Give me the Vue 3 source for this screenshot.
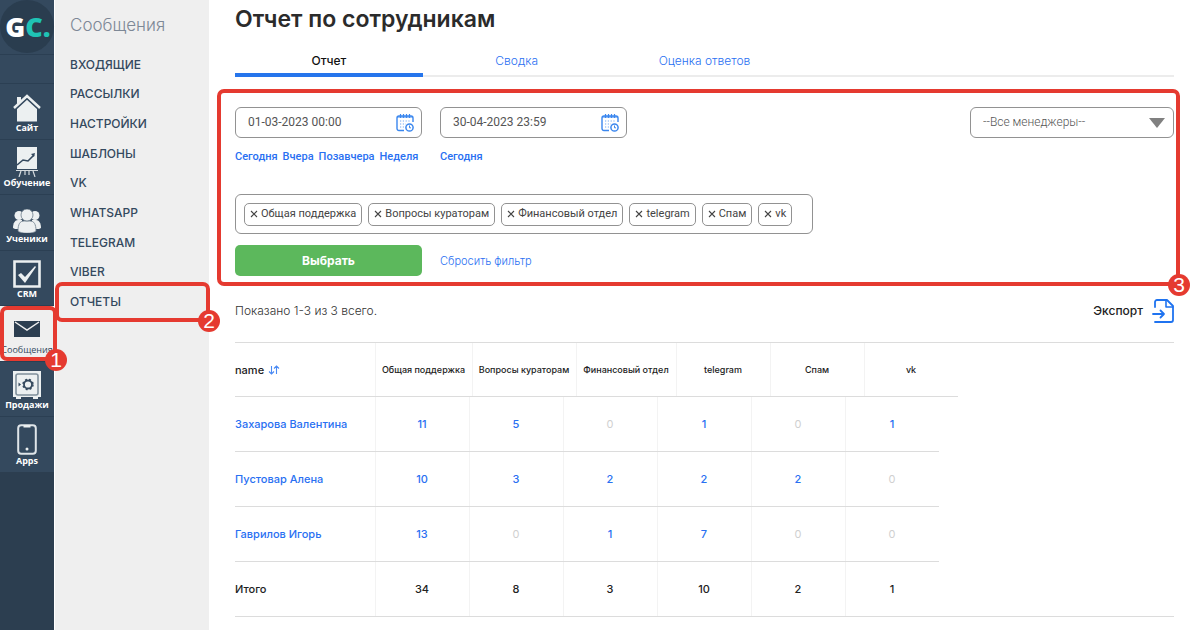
<script setup>
import { ref } from 'vue'

const sections = ['ВХОДЯЩИЕ', 'РАССЫЛКИ', 'НАСТРОЙКИ', 'ШАБЛОНЫ', 'VK', 'WHATSAPP', 'TELEGRAM', 'VIBER', 'ОТЧЕТЫ']
const rail = [
  { id: 'site', label: 'Сайт' },
  { id: 'learn', label: 'Обучение' },
  { id: 'users', label: 'Ученики' },
  { id: 'crm', label: 'CRM' },
  { id: 'mail', label: 'Сообщения', active: true },
  { id: 'sales', label: 'Продажи' },
  { id: 'apps', label: 'Apps' }
]
const dates = [
  { id: 'from', label: 'Начало периода', value: ref('01-03-2023 00:00'), quick: ['Сегодня', 'Вчера', 'Позавчера', 'Неделя'] },
  { id: 'to', label: 'Конец периода', value: ref('30-04-2023 23:59'), quick: ['Сегодня'] }
]
const channels = ref(['Общая поддержка', 'Вопросы кураторам', 'Финансовый отдел', 'telegram', 'Спам', 'vk'])
const columns = ['Общая поддержка', 'Вопросы кураторам', 'Финансовый отдел', 'telegram', 'Спам', 'vk']
const rows = [
  { name: 'Захарова Валентина', values: [11, 5, 0, 1, 0, 1] },
  { name: 'Пустовар Алена', values: [10, 3, 2, 2, 2, 0] },
  { name: 'Гаврилов Игорь', values: [13, 0, 1, 7, 0, 0] }
]
const totals = [34, 8, 3, 10, 2, 1]
const remove = (name) => { channels.value = channels.value.filter((c) => c !== name) }
</script>

<template>
  <div class="page">
    <nav class="rail" aria-label="Разделы">
      <a class="logo" href="#"><span class="disc"><span class="g">G</span><span class="c">C.</span></span></a>
      <div class="spacer"></div>
      <div class="rail-items">
        <a v-for="item in rail" :key="item.id" href="#" class="rail-item" :class="{ active: item.active }">
          <svg v-if="item.id === 'site'" width="28" height="28" viewBox="0 0 28 28">
            <path d="M4 3h4v4l-4 4z" fill="#ecf0f1" />
            <path d="M14 4.500L24 14v13.500H4V14z" fill="#ecf0f1" />
            <path d="M1 15.500L14 3.500l13 12" fill="none" stroke="#34495e" stroke-width="3.500" />
            <path d="M1 14L14 2l13 12" fill="none" stroke="#ecf0f1" stroke-width="2.400" />
          </svg>
          <svg v-else-if="item.id === 'learn'" width="28" height="30" viewBox="0 0 28 30">
            <path d="M4 0h20v22H4z" fill="#ecf0f1" />
            <path d="M3 23.500h22M8 24l-2 6M20 24l2 6M12 24v4M16 24v4" stroke="#d5dbdf" stroke-width="1.200" />
            <path d="M4 18l6-5 5 1 6-6" fill="none" stroke="#34495e" stroke-width="1.600" />
            <path d="M18 7l4-1-1 4z" fill="#34495e" />
          </svg>
          <svg v-else-if="item.id === 'users'" width="28" height="24" viewBox="0 0 28 24" fill="#ecf0f1">
            <circle cx="6" cy="6.500" r="4.500" /><circle cx="22" cy="6.500" r="4.500" />
            <path d="M0 19c0-5 2-8 5-8h4v9H2z" /><path d="M28 19c0-5-2-8-5-8h-4v9h7z" />
            <g stroke="#6d7d8c" stroke-width="0.800"><path d="M5 22c0-7 2-10 6-10h6c4 0 6 3 6 10-3 3-15 3-18 0z" /><circle cx="14" cy="6" r="6" /></g>
          </svg>
          <svg v-else-if="item.id === 'crm'" width="28" height="28" viewBox="0 0 28 28">
            <path d="M1.500 1.500h25v25h-25z" fill="none" stroke="#ecf0f1" stroke-width="2.600" />
            <path d="M5 15l3-2 4 4L22 6l1 1-11 16z" fill="#ecf0f1" />
          </svg>
          <svg v-else-if="item.id === 'mail'" width="28" height="18" viewBox="0 0 28 18">
            <path d="M1 1h26v16H1z" fill="#2c3e50" />
            <path d="M2 2l12 8 12-8" fill="none" stroke="#efefef" stroke-width="1.500" />
          </svg>
          <svg v-else-if="item.id === 'sales'" width="28" height="28" viewBox="0 0 28 28">
            <path d="M0 0h28v26h-3v2h-5v-2H8v2H3v-2H0z" fill="#ecf0f1" />
            <rect x="3" y="3" width="22" height="21" rx="2" fill="none" stroke="#7f8f9b" stroke-width="1.600" />
            <circle cx="15" cy="13.500" r="4" fill="none" stroke="#34495e" stroke-width="1.800" />
            <circle cx="15" cy="13.500" r="5" fill="none" stroke="#34495e" stroke-width="1.500" stroke-dasharray="2 2" />
            <path d="M5.500 11.500L8 13.500l-2.500 2z" fill="#34495e" />
          </svg>
          <svg v-else width="20" height="31" viewBox="0 0 20 31">
            <rect x="1.200" y="1.200" width="17.600" height="28.600" rx="3" fill="none" stroke="#dfe5e9" stroke-width="2" />
            <path d="M6.500 1h7v2.500h-7z" fill="#ecf0f1" /><circle cx="10" cy="25" r="1.500" fill="#ecf0f1" />
          </svg>
          <span>{{ item.label }}</span>
          <i v-if="item.active" class="frame frame-rail"><b>1</b></i>
        </a>
      </div>
    </nav>

    <aside class="sidebar">
      <h2>Сообщения</h2>
      <nav class="menu" aria-label="Сообщения">
        <a v-for="name in sections" :key="name" href="#">
          {{ name }}
          <i v-if="name === 'ОТЧЕТЫ'" class="frame frame-menu"><b>2</b></i>
        </a>
      </nav>
    </aside>

    <main>
      <h1>Отчет по сотрудникам</h1>
      <nav class="tabs" aria-label="Вид отчета">
        <a href="#" class="current">Отчет</a>
        <a href="#">Сводка</a>
        <a href="#">Оценка ответов</a>
      </nav>

      <form class="filters" @submit.prevent>
        <i class="frame frame-filters"><b>3</b></i>
        <div class="filter-row">
          <div v-for="d in dates" :key="d.id" class="date">
            <div class="field">
              <input :id="d.id" v-model="d.value.value" type="text" :aria-label="d.label">
              <svg width="18" height="18" viewBox="0 0 18 18" fill="none" stroke="#3b87ee">
                <path d="M8 16.500H3A2 2 0 0 1 1 14.500V4a2 2 0 0 1 2-2h12a2 2 0 0 1 2 2v4" stroke-width="1.400" />
                <path d="M1 3h16M4.500 0v4M7.500 0v4M10.500 0v4M13.500 0v4" stroke-width="1.200" />
                <path d="M4 7h11M4 10h6M4 13h5" stroke-width="1.200" stroke-dasharray="1.200 1.600" stroke-opacity="0.700" />
                <circle cx="13.500" cy="13.500" r="3.600" stroke-width="1.500" />
                <path d="M13.500 11.500v2.300H15" stroke-width="1" />
              </svg>
            </div>
            <div class="quick"><a v-for="q in d.quick" :key="q" href="#">{{ q }}</a></div>
          </div>
          <div class="manager">
            <select aria-label="Менеджер"><option>--Все менеджеры--</option></select>
            <svg width="16" height="10" viewBox="0 0 16 10"><path d="M0 0h16L8 10z" fill="#808080" /></svg>
          </div>
        </div>
        <div class="chips">
          <button v-for="c in channels" :key="c" type="button" @click="remove(c)">
            <svg width="8" height="8" viewBox="0 0 8 8"><path d="M1 1l6 6M7 1L1 7" stroke="#444" stroke-width="1.100" /></svg>{{ c }}
          </button>
        </div>
        <div class="actions">
          <button type="submit">Выбрать</button>
          <a href="#">Сбросить фильтр</a>
        </div>
      </form>

      <div class="summary">
        <span>Показано 1-3 из 3 всего.</span>
        <a href="#">Экспорт
          <svg width="22" height="24" viewBox="0 0 22 24" fill="none" stroke="#1f73f0" stroke-width="1.800" stroke-linejoin="round" stroke-linecap="round">
            <path d="M3 8V3a2 2 0 0 1 2-2h10l6 6v14a2 2 0 0 1-2 2H3" /><path d="M14 1v7h7" stroke-width="1.600" />
            <path d="M1 15h11M8.500 11.500L12 15l-3.500 3.500" />
          </svg>
        </a>
      </div>

      <table>
        <thead>
          <tr>
            <th scope="col">name
              <svg width="12" height="10" viewBox="0 0 12 10" fill="none" stroke="#4a8af4" stroke-width="1.100"><path d="M3.500 1v8M1 6.500L3.500 9 6 6.500M8.500 9V1M6 3.500L8.500 1 11 3.500" /></svg>
            </th>
            <th v-for="c in columns" :key="c" scope="col">{{ c }}</th>
          </tr>
        </thead>
        <tbody>
          <tr v-for="r in rows" :key="r.name">
            <th scope="row"><a href="#">{{ r.name }}</a></th>
            <td v-for="(v, i) in r.values" :key="i"><a v-if="v" href="#">{{ v }}</a><span v-else>0</span></td>
          </tr>
        </tbody>
        <tfoot>
          <tr>
            <th scope="row">Итого</th>
            <td v-for="(v, i) in totals" :key="i">{{ v }}</td>
          </tr>
        </tfoot>
      </table>
    </main>
  </div>
</template>

<style>
body { margin: 0; background: #fff; }
</style>

<style scoped>
* { box-sizing: border-box; }
.page { display: flex; min-height: 100vh; font-family: Inter, "Noto Sans", sans-serif; font-size: 12px; line-height: 16px; color: #222; }
a { color: #2970f2; text-decoration: none; }
h1, h2 { margin: 0; }
input, select, button { font: inherit; }

.frame { position: absolute; border: 4px solid #e53a30; border-radius: 7px; pointer-events: none; z-index: 2; }
.frame b { position: absolute; right: -14px; bottom: -14px; width: 22px; height: 22px; border-radius: 50%; background: #e53a30; color: #fff; font: 21px/22px "Liberation Sans", Arial, sans-serif; text-align: center; }
.frame-rail { inset: 0 -3px 0 0; }
.frame-menu { inset: -5px -1px -5px -15px; }
.frame-filters { inset: -18px -6px -10px -18px; }

.rail { width: 54px; flex: none; background: #2c3e50; }
.logo { display: block; height: 54px; background: #34495e; }
.disc { display: flex; align-items: center; justify-content: center; height: 53px; padding-left: 2px; border-radius: 50%; background: #2a3d4f; font: 800 27px/53px "Open Sans", sans-serif; color: #fff; }
.c { color: #1fc3b5; }
.spacer { height: 29px; background: #34495e; border-top: 1px solid #2b3f53; }
.rail-items { display: grid; grid-template-rows: repeat(7, 1fr); height: 389px; }
.rail-item { position: relative; display: flex; flex-direction: column; align-items: center; justify-content: flex-end; padding-bottom: 5px; background: #34495e; border-top: 1px solid #2b3f53; color: #fff; font: bold 9px/12px "Open Sans", sans-serif; }
.rail-item.active { background: #efefef; color: #34495e; font-weight: 400; gap: 6px; }

.sidebar { width: 154px; flex: none; margin-left: 1px; background: #efefef; color: #34495e; }
.sidebar h2 { height: 50px; padding-left: 15px; font-size: 17px; line-height: 50px; font-weight: 300; color: #7d8896; }
.menu { display: grid; grid-template-rows: repeat(9, 1fr); height: 267px; }
.menu a { position: relative; display: flex; align-items: center; margin-left: 15px; color: #34495e; font-weight: 500; }

main { flex: 1; min-width: 0; padding: 0 26px; }
h1 { font-size: 23px; line-height: 38px; font-weight: 600; color: #2b2b2b; }
.tabs { display: flex; height: 39px; border-bottom: 2px solid #ececec; }
.tabs a { width: 20%; height: 39px; line-height: 46px; text-align: center; font-weight: 300; }
.tabs .current { color: #111; font-weight: 500; border-bottom: 4px solid #2675ec; }

.filters { position: relative; margin-top: 30px; }
.filter-row { display: flex; gap: 18px; }
.date { width: 187px; }
.field { position: relative; display: flex; }
.field input { width: 100%; height: 31px; padding: 0 36px 2px 12px; border: 1px solid #929292; border-radius: 6px; color: #555; background: #fff; font-family: Roboto, sans-serif; }
.field svg { position: absolute; right: 8px; top: 7px; }
.quick { display: flex; gap: 5px; margin-top: 11px; font-family: Roboto, sans-serif; font-size: 11px; font-weight: 500; white-space: nowrap; }
.manager { position: relative; width: 204px; height: 31px; margin-left: auto; }
.manager select { width: 100%; height: 31px; padding: 0 30px 2px 12px; appearance: none; border: 1px solid #929292; border-radius: 6px; color: #555; background: #fff; font-family: Roboto, sans-serif; font-weight: 300; }
.manager svg { position: absolute; right: 9px; top: 11px; pointer-events: none; }
.chips { display: flex; align-items: center; gap: 6px; width: 578px; height: 40px; margin-top: 29px; padding: 0 8px; border: 1px solid #929292; border-radius: 6px; }
.chips button { display: flex; align-items: center; gap: 3px; height: 23px; padding: 0 5px; border: 1px solid #929292; border-radius: 5px; background: #fff; color: #444; font-family: Roboto, sans-serif; font-size: 11px; white-space: nowrap; }
.actions { display: flex; align-items: center; gap: 18px; margin-top: 11px; font-size: 11px; }
.actions button { width: 187px; height: 31px; border: 0; border-radius: 5px; background: #5cb85c; color: #fff; font-size: 12px; font-weight: 700; }
.actions a { font-weight: 300; }

.summary { display: flex; justify-content: space-between; align-items: center; height: 24px; margin: 23px 0 19px; color: #333; font-weight: 300; }
.summary a { display: flex; align-items: center; gap: 9px; color: #222; font-weight: 500; }

table { display: block; border-top: 1px solid #dcdcdc; border-bottom: 1px solid #dcdcdc; }
thead, tbody, tfoot { display: block; }
tr { display: flex; width: max-content; height: 55px; border-bottom: 1px solid #dcdcdc; }
thead tr { height: 54px; }
tfoot tr { height: 54px; border-bottom: 0; }
th, td { display: flex; align-items: center; justify-content: center; width: 94px; padding: 0 1px 0 0; font-size: 11px; font-weight: 500; border-left: 1px solid #f3f3f3; white-space: nowrap; }
th:first-child { width: 140px; justify-content: flex-start; gap: 4px; border-left: 0; }
thead th { font-size: 9px; font-weight: 500; }
thead th:first-child { font-size: 11px; }
thead th:nth-child(2) { width: 97px; }
thead th:nth-child(3) { width: 104px; }
thead th:nth-child(4) { width: 100px; }
td span { color: #d0d0d0; font-weight: 400; }
</style>
